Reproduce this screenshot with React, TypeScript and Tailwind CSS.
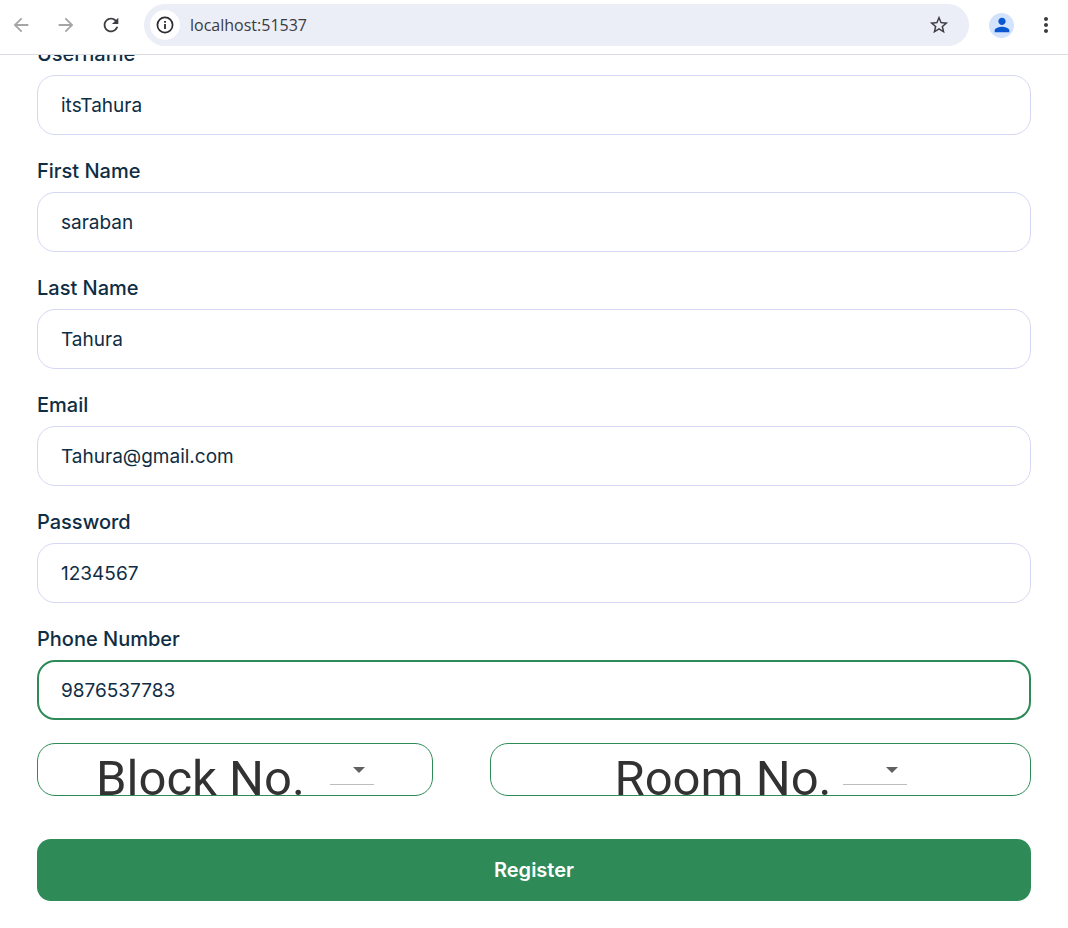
import { useState } from "react";
import { MdArrowBack, MdArrowForward, MdMoreVert, MdPerson, MdRefresh, MdStarBorder } from "react-icons/md";

type FieldProps = { id: string; label: string; initial: string; type?: string; active?: boolean };

function Field({ id, label, initial, type = "text", active = false }: FieldProps) {
  const [value, setValue] = useState(initial);
  return (
    <div className="flex flex-col gap-[7px]">
      <label htmlFor={id} className="text-xl leading-[27px] font-medium">
        {label}
      </label>
      <input
        id={id}
        type={type}
        value={value}
        onChange={(e) => setValue(e.target.value)}
        className={
          active
            ? "h-[60px] w-full rounded-[18px] border-2 border-[#2e8b57] bg-white px-[22px] text-[19px] outline-none"
            : "h-[60px] w-full rounded-[18px] border border-[#d6d7f5] bg-white px-[23px] text-[19px] outline-none"
        }
      />
    </div>
  );
}

type PickerProps = { id: string; label: string; wide?: boolean; options: string[] };

function Picker({ id, label, wide = false, options }: PickerProps) {
  return (
    <div
      className={
        wide
          ? "flex h-[53px] items-start justify-center gap-[11px] overflow-hidden rounded-[18px] border border-[#2e8b57]"
          : "flex h-[53px] items-start justify-center gap-[25px] overflow-hidden rounded-[18px] border border-[#2e8b57]"
      }
    >
      <label htmlFor={id} className="pt-[5px] font-[Roboto,sans-serif] text-[49px] leading-[60px] whitespace-nowrap text-[#323232]">
        {label}
      </label>
      <div className={wide ? "relative w-16 shrink-0" : "relative w-11 shrink-0"}>
        <select id={id} defaultValue="" className="block h-[41px] w-full appearance-none border-b border-[#bdbdbd] bg-transparent outline-none">
          <option value="" />
          {options.map((o) => (
            <option key={o} value={o}>
              {o}
            </option>
          ))}
        </select>
        <svg viewBox="0 0 12 6" className="pointer-events-none absolute top-[23px] right-[9px] h-[6px] w-3" aria-hidden="true">
          <path d="M0 0h12L6 6z" fill="#616161" />
        </svg>
      </div>
    </div>
  );
}

export default function App() {
  return (
    <div className="overflow-hidden bg-white font-[Inter,sans-serif] text-[#0f2d44]">
      <header className="relative z-10 flex h-[55px] items-center border-b border-[#dcdde3] bg-white px-[10px] pb-1">
        <div className="flex gap-[23px] text-[22px] text-[#a5a5a5]">
          <button type="button" aria-label="Back">
            <MdArrowBack />
          </button>
          <button type="button" aria-label="Forward">
            <MdArrowForward />
          </button>
          <button type="button" aria-label="Reload" className="text-[#3c3d40]">
            <MdRefresh />
          </button>
        </div>
        <div className="ml-[22px] flex h-[42px] flex-1 items-center rounded-full bg-[#ebedf7] pr-[19px] pl-[6px]">
          <button type="button" aria-label="Site information" className="flex size-[30px] items-center justify-center rounded-full bg-white">
            <svg viewBox="0 0 18 18" className="size-[18px]" fill="none" stroke="#2b2c2f" aria-hidden="true">
              <circle cx="9" cy="9" r="7.6" strokeWidth="1.7" />
              <path d="M9 8v5M9 5v1.8" strokeWidth="1.8" />
            </svg>
          </button>
          <input
            aria-label="Address"
            defaultValue="localhost:51537"
            className="ml-[10px] min-w-0 flex-1 bg-transparent font-['Open_Sans',sans-serif] text-base text-[#3a3b40] outline-none"
          />
          <button type="button" aria-label="Bookmark" className="text-[22px] text-[#3c3d40]">
            <MdStarBorder />
          </button>
        </div>
        <button type="button" aria-label="Profile" className="ml-5 flex size-[25px] items-center justify-center rounded-full bg-[#d3e3fd] text-[22px] text-[#0b57d0]">
          <MdPerson />
        </button>
        <button type="button" aria-label="Menu" className="ml-5 text-[24px] text-[#3c3d40]">
          <MdMoreVert />
        </button>
      </header>
      <main className="-mt-[14px] px-[37px] pb-7">
        <form className="flex flex-col gap-[23px]" onSubmit={(e) => e.preventDefault()}>
          <Field id="username" label="Username" initial="itsTahura" />
          <Field id="first-name" label="First Name" initial="saraban" />
          <Field id="last-name" label="Last Name" initial="Tahura" />
          <Field id="email" label="Email" initial="Tahura@gmail.com" type="email" />
          <Field id="password" label="Password" initial="1234567" />
          <Field id="phone" label="Phone Number" initial="9876537783" type="tel" active />
          <div className="grid grid-cols-[396fr_541fr] gap-[57px]">
            <Picker id="block" label="Block No." options={["A", "B", "C"]} />
            <Picker id="room" label="Room No." options={["101", "102", "103"]} wide />
          </div>
          <button type="submit" className="mt-5 h-[62px] w-full rounded-[14px] bg-[#2e8b57] text-xl font-semibold text-white">
            Register
          </button>
        </form>
      </main>
    </div>
  );
}
